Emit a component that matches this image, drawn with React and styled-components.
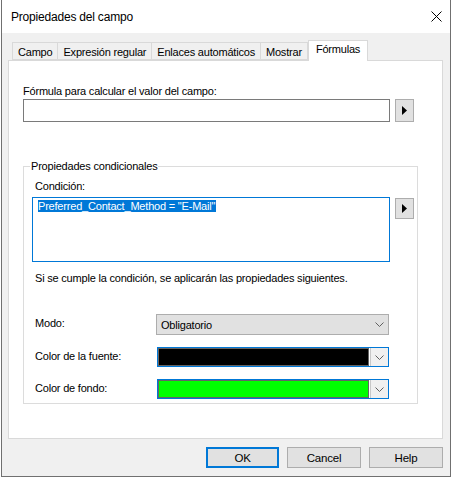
import styled, { createGlobalStyle } from "styled-components";

const Global = createGlobalStyle`
  html, body {
    margin: 0;
    padding: 0;
    background: #ffffff;
  }
  body {
    font-family: "Liberation Sans", Arial, sans-serif;
    font-size: 11px;
    letter-spacing: -0.2px;
    color: #000000;
  }
`;

const Window = styled.div`
  margin-left: 1px;
  width: 448px;
  height: 476px;
  border: 1px solid #707070;
  border-top: none;
  background: #f0f0f0;
  display: flex;
  flex-direction: column;
`;

const TitleBar = styled.div`
  height: 33px;
  background: #ffffff;
  display: flex;
  align-items: center;
  justify-content: space-between;
  padding: 0 8px 0 9px;
  font-size: 12px;
`;

const Body = styled.div`
  flex: 1;
  display: flex;
  flex-direction: column;
  padding: 7px 7px 8px 6px;
`;

const TabStrip = styled.div`
  display: flex;
  padding-left: 4px;
  height: 20px;
  align-items: flex-end;
  position: relative;
  z-index: 1;
`;

const Tab = styled.div`
  height: ${p => (p.$active ? "21px" : "18px")};
  margin-bottom: ${p => (p.$active ? "-1px" : "0")};
  box-sizing: border-box;
  padding: ${p => (p.$active ? "1px 7px 0" : "2px 5px 0")};
  border: 1px solid #d9d9d9;
  border-bottom: ${p => (p.$active ? "none" : "1px solid #d9d9d9")};
  border-left: ${p => (p.$first || p.$active ? "1px solid #d9d9d9" : "none")};
  background: ${p => (p.$active ? "#ffffff" : "#f0f0f0")};
  white-space: nowrap;
  line-height: 14px;
`;

const Panel = styled.div`
  height: 379px;
  box-sizing: border-box;
  background: #ffffff;
  border: 1px solid #d9d9d9;
  padding: 23px 0 0 14px;
  display: flex;
  flex-direction: column;
`;

const Label = styled.div`
  line-height: 14px;
  padding-left: ${p => p.$indent || 0}px;
`;

const FieldRow = styled.div`
  display: flex;
  align-items: flex-start;
  gap: 5px;
  margin-top: ${p => p.$top || 0}px;
`;

const TextInput = styled.div`
  width: 367px;
  height: 23px;
  box-sizing: border-box;
  border: 1px solid #7a7a7a;
  background: #ffffff;
`;

const TextArea = styled.div`
  width: 358px;
  height: 65px;
  box-sizing: border-box;
  border: 1px solid #0078d7;
  background: #ffffff;
  padding: 2px 0 0 5px;
  line-height: 13px;
`;

const Selected = styled.span`
  background: #0078d7;
  color: #ffffff;
  padding-right: 1px;
`;

const ArrowButton = styled.div`
  width: 19px;
  height: ${p => p.$h || 23}px;
  margin-top: ${p => p.$top || 0}px;
  box-sizing: border-box;
  border: 1px solid #adadad;
  background: #e1e1e1;
  display: flex;
  align-items: center;
  justify-content: center;
`;

const Group = styled.fieldset`
  width: 395px;
  height: 245px;
  box-sizing: border-box;
  margin: 37px 0 0;
  border: 1px solid #dcdcdc;
  padding: 6px 0 0 8px;
  display: flex;
  flex-direction: column;
`;

const Legend = styled.legend`
  padding: 0 1px;
  margin-left: -2px;
  line-height: 14px;
`;

const Hint = styled.div`
  line-height: 14px;
  padding-left: 3px;
  margin-top: 9px;
`;

const PropGrid = styled.div`
  display: grid;
  grid-template-columns: 124px 233px;
  row-gap: 12px;
  margin-top: 29px;
  align-items: center;
`;

const PropLabel = styled.div`
  padding-left: 3px;
  line-height: 14px;
  align-self: start;
  margin-top: 2px;
`;

const Select = styled.div`
  height: 21px;
  box-sizing: border-box;
  border: 1px solid #adadad;
  background: #e1e1e1;
  display: flex;
  align-items: center;
  justify-content: space-between;
  padding: 0 4px 0 4px;
`;

const ColorPicker = styled.div`
  height: 20px;
  margin-left: 1px;
  box-sizing: border-box;
  border: 1px solid #0078d7;
  background: #ffffff;
  display: flex;
`;

const Swatch = styled.div`
  flex: 1;
  border: 1px solid #646464;
  background: ${p => p.$color};
  margin-right: 1px;
`;

const DropButton = styled.div`
  width: 17px;
  border-left: 1px solid #c8c8c8;
  background: #f0f0f0;
  display: flex;
  align-items: center;
  justify-content: center;
`;

const Footer = styled.div`
  display: flex;
  justify-content: flex-end;
  gap: 8px;
  margin-top: 8px;
`;

const Button = styled.div`
  width: ${p => p.$w || 74}px;
  height: 21px;
  box-sizing: border-box;
  border: ${p => (p.$default ? "2px solid #0078d7" : "1px solid #adadad")};
  background: #e1e1e1;
  display: flex;
  align-items: center;
  justify-content: center;
  font-size: 11.5px;
`;

function Chevron() {
  return (
    <svg width="9" height="5" viewBox="0 0 9 5">
      <path d="M0.5 0.5 L4.5 4.5 L8.5 0.5" fill="none" stroke="#606060" strokeWidth="1" />
    </svg>
  );
}

function Triangle() {
  return (
    <svg width="5" height="9" viewBox="0 0 5 9">
      <polygon points="0,0 5,4.5 0,9" fill="#000" />
    </svg>
  );
}

function CloseIcon() {
  return (
    <svg width="11" height="11" viewBox="0 0 11 11">
      <path d="M0.5 0.5 L10.5 10.5 M10.5 0.5 L0.5 10.5" stroke="#000" strokeWidth="1" />
    </svg>
  );
}

const tabs = ["Campo", "Expresión regular", "Enlaces automáticos", "Mostrar", "Fórmulas"];

export default function App() {
  return (
    <>
      <Global />
      <Window>
        <TitleBar>
          <span>Propiedades del campo</span>
          <CloseIcon />
        </TitleBar>
        <Body>
          <TabStrip>
            {tabs.map((t, i) => (
              <Tab key={t} $first={i === 0} $active={t === "Fórmulas"}>{t}</Tab>
            ))}
          </TabStrip>
          <Panel>
            <Label>Fórmula para calcular el valor del campo:</Label>
            <FieldRow $top={1}>
              <TextInput />
              <ArrowButton><Triangle /></ArrowButton>
            </FieldRow>
            <Group>
              <Legend>Propiedades condicionales</Legend>
              <Label $indent={3}>Condición:</Label>
              <FieldRow $top={4}>
                <TextArea>
                  <Selected>Preferred_Contact_Method = "E-Mail"</Selected>
                </TextArea>
                <ArrowButton $h={21} $top={1}><Triangle /></ArrowButton>
              </FieldRow>
              <Hint>Si se cumple la condición, se aplicarán las propiedades siguientes.</Hint>
              <PropGrid>
                <PropLabel>Modo:</PropLabel>
                <Select>
                  <span>Obligatorio</span>
                  <Chevron />
                </Select>
                <PropLabel>Color de la fuente:</PropLabel>
                <ColorPicker>
                  <Swatch $color="#000000" />
                  <DropButton><Chevron /></DropButton>
                </ColorPicker>
                <PropLabel>Color de fondo:</PropLabel>
                <ColorPicker>
                  <Swatch $color="#00ff00" />
                  <DropButton><Chevron /></DropButton>
                </ColorPicker>
              </PropGrid>
            </Group>
          </Panel>
          <Footer>
            <Button $default $w={73}>OK</Button>
            <Button>Cancel</Button>
            <Button>Help</Button>
          </Footer>
        </Body>
      </Window>
    </>
  );
}
